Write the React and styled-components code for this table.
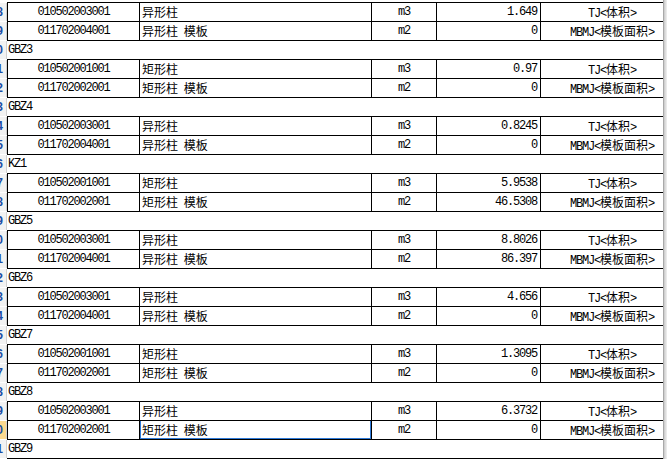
import React from 'react';
import styled, { createGlobalStyle, css } from 'styled-components';

const GlobalStyle = createGlobalStyle`
  html, body {
    margin: 0;
    padding: 0;
    background: #ffffff;
    overflow: hidden;
  }
`;

const LATIN = `"Liberation Mono", "Noto Sans CJK SC", monospace`;
const CJK = `"Noto Sans CJK SC", sans-serif`;

const rows = [
  { code: '010502003001', name: '异形柱', unit: 'm3', qty: '1.649', expr: 'TJ' },
  { code: '011702004001', name: '异形柱 模板', unit: 'm2', qty: '0', expr: 'MBMJ' },
  { group: 'GBZ3' },
  { code: '010502001001', name: '矩形柱', unit: 'm3', qty: '0.97', expr: 'TJ' },
  { code: '011702002001', name: '矩形柱 模板', unit: 'm2', qty: '0', expr: 'MBMJ' },
  { group: 'GBZ4' },
  { code: '010502003001', name: '异形柱', unit: 'm3', qty: '0.8245', expr: 'TJ' },
  { code: '011702004001', name: '异形柱 模板', unit: 'm2', qty: '0', expr: 'MBMJ' },
  { group: 'KZ1' },
  { code: '010502001001', name: '矩形柱', unit: 'm3', qty: '5.9538', expr: 'TJ' },
  { code: '011702002001', name: '矩形柱 模板', unit: 'm2', qty: '46.5308', expr: 'MBMJ' },
  { group: 'GBZ5' },
  { code: '010502003001', name: '异形柱', unit: 'm3', qty: '8.8026', expr: 'TJ' },
  { code: '011702004001', name: '异形柱 模板', unit: 'm2', qty: '86.397', expr: 'MBMJ' },
  { group: 'GBZ6' },
  { code: '010502003001', name: '异形柱', unit: 'm3', qty: '4.656', expr: 'TJ' },
  { code: '011702004001', name: '异形柱 模板', unit: 'm2', qty: '0', expr: 'MBMJ' },
  { group: 'GBZ7' },
  { code: '010502001001', name: '矩形柱', unit: 'm3', qty: '1.3095', expr: 'TJ' },
  { code: '011702002001', name: '矩形柱 模板', unit: 'm2', qty: '0', expr: 'MBMJ' },
  { group: 'GBZ8' },
  { code: '010502003001', name: '异形柱', unit: 'm3', qty: '6.3732', expr: 'TJ' },
  { code: '011702002001', name: '矩形柱 模板', unit: 'm2', qty: '0', expr: 'MBMJ', selected: true },
  { group: 'GBZ9' },
];

const Screen = styled.div`
  display: flex;
  width: 667px;
  height: 459px;
  overflow: hidden;
  background: #fff;
`;

const Sheet = styled.div`
  width: 663px;
  overflow: hidden;
  padding-top: 2px;
  box-sizing: border-box;
`;

const Edge = styled.div`
  width: 4px;
  background: linear-gradient(90deg, #8a8a8a 0, #c8c8c8 1px, #e4e4e4 3px, #f0f0f0 4px);
`;

const Table = styled.div`
  width: 683px;
  border-top: 1px solid #000;
  margin-left: 7px;
  position: relative;
`;

const Row = styled.div`
  display: flex;
  height: 19px;
  box-sizing: border-box;
  border-bottom: 1px solid #000;
  position: relative;
`;

const RowNo = styled.div`
  position: absolute;
  left: -7px;
  top: 0;
  width: 7px;
  height: 18px;
  display: flex;
  justify-content: flex-end;
  align-items: center;
  overflow: hidden;
  background: ${(p) => (p.$active ? '#fbd98f' : '#f2f2f2')};
  border-right: 1px solid #d0d0d0;
  box-sizing: border-box;
  padding-right: 3px;
  font-family: "Liberation Sans", sans-serif;
  font-size: 12px;
  font-weight: bold;
  color: #1b4ea6;
  white-space: nowrap;
`;

const Cell = styled.div`
  height: 18px;
  line-height: 18px;
  box-sizing: border-box;
  border-left: 1px solid #000;
  white-space: nowrap;
  overflow: hidden;
  font-family: ${LATIN};
  font-size: 12px;
  letter-spacing: -1.2px;
  color: #000;
  ${(p) => p.$w && css`width: ${p.$w}px;`}
  ${(p) =>
    p.$align === 'center' &&
    css`
      text-align: center;
    `}
  ${(p) =>
    p.$align === 'right' &&
    css`
      text-align: right;
      padding-right: 3px;
    `}
`;

const NameCell = styled(Cell)`
  font-family: ${CJK};
  letter-spacing: 0;
  word-spacing: 3px;
  padding-left: 2px;
  position: relative;
`;

const Selection = styled.div`
  position: absolute;
  left: -1px;
  top: -2px;
  right: -1px;
  bottom: -1px;
  border: 2px solid #2f7ad8;
`;

const Han = styled.span`
  font-family: ${CJK};
  letter-spacing: 0;
`;

const GroupLabel = styled.div`
  height: 18px;
  line-height: 18px;
  padding-left: 1px;
  font-family: ${LATIN};
  font-size: 12px;
  letter-spacing: -1.2px;
  color: #000;
`;

function Expr({ kind }) {
  if (kind === 'TJ') {
    return (
      <>
        TJ&lt;<Han>体积</Han>&gt;
      </>
    );
  }
  return (
    <>
      MBMJ&lt;<Han>模板面积</Han>&gt;
    </>
  );
}

export default function App() {
  return (
    <Screen>
      <GlobalStyle />
      <Sheet>
        <Table>
          {rows.map((r, i) => {
            const no = 28 + i;
            if (r.group) {
              return (
                <Row key={i}>
                  <RowNo>{no}</RowNo>
                  <GroupLabel>{r.group}</GroupLabel>
                </Row>
              );
            }
            return (
              <Row key={i}>
                <RowNo $active={r.selected}>{no}</RowNo>
                <Cell $w={132} $align="center">{r.code}</Cell>
                <NameCell $w={232}>
                  {r.name}
                  {r.selected && <Selection />}
                </NameCell>
                <Cell $w={65} $align="center">{r.unit}</Cell>
                <Cell $w={104} $align="right">{r.qty}</Cell>
                <Cell $w={143} $align="center">
                  <Expr kind={r.expr} />
                </Cell>
              </Row>
            );
          })}
        </Table>
      </Sheet>
      <Edge />
    </Screen>
  );
}
